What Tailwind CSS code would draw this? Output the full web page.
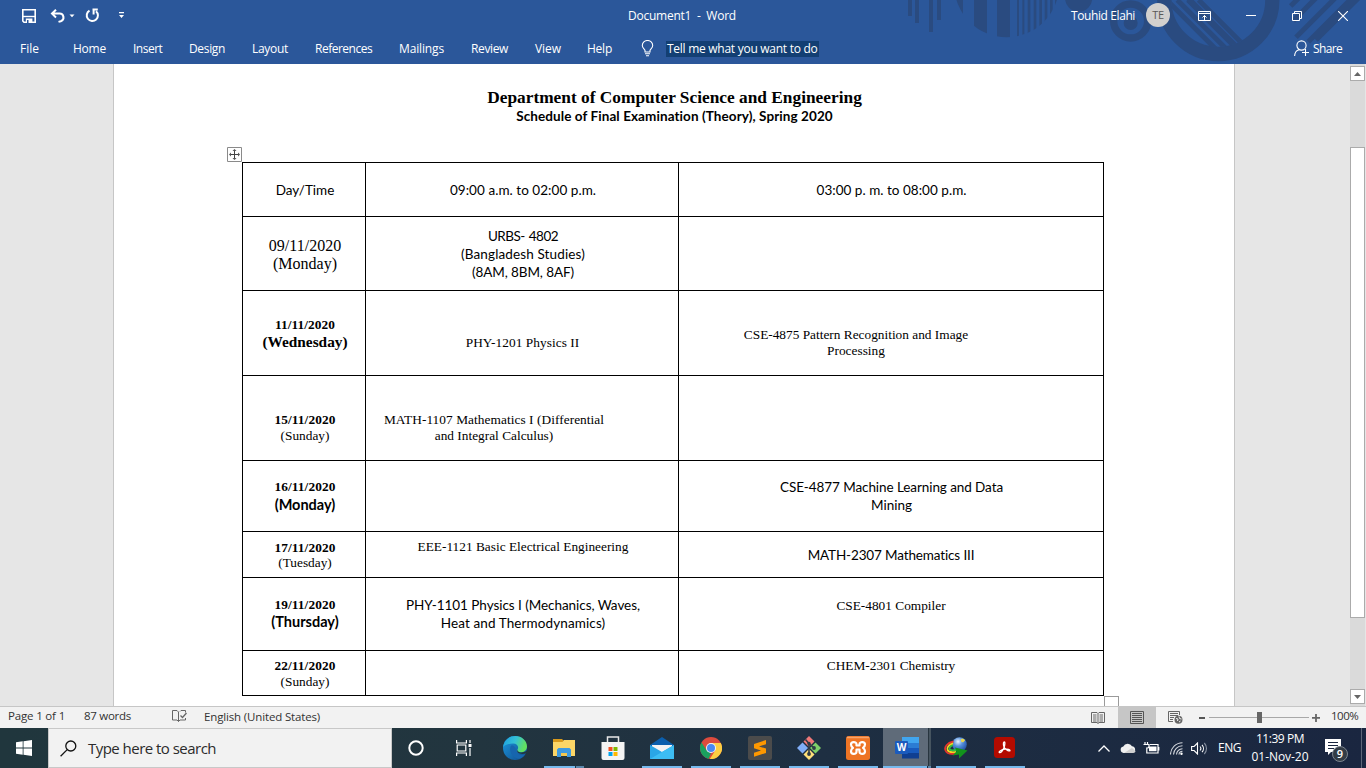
<!DOCTYPE html>
<html lang="en">
<head>
<meta charset="utf-8">
<title>Document1 - Word</title>
<script src="https://cdn.jsdelivr.net/npm/@tailwindcss/browser@4"></script>
</head>
<body class="w-[1366px] h-[768px] overflow-hidden flex flex-col font-['Open_Sans',sans-serif] text-[12px]">

<!-- Title bar and ribbon tabs -->
<header class="relative h-16 shrink-0 bg-[#2b579a] text-white flex flex-col">
  <svg class="absolute right-0 top-0" width="476" height="64" viewBox="0 0 1428 192">
    <defs>
      <clipPath id="disc"><circle cx="350" cy="-45" r="157"/></clipPath>
      <clipPath id="ring"><circle cx="985" cy="0" r="141"/></clipPath>
    </defs>
    <g fill="#2a4b80">
      <path d="M54 0h12v48H54zM75 0h12v69H75zM117 0h12v96h-12zM141 0h12v60h-12z"/>
      <g clip-path="url(#disc)"><path d="M190 0h29v120h-29zM252 0h39v120h-39zM321 0h39v120h-39zM381 0h6v120h-6zM397 0h6v120h-6zM413 0h8v120h-8zM431 0h8v120h-8zM448 0h8v120h-8zM464 0h8v120h-8zM480 0h8v120h-8zM495 0h8v120h-8z"/></g>
      <circle cx="566" cy="-6" r="41"/>
      <circle cx="722" cy="69" r="17"/>
    </g>
    <g fill="none" stroke="#2a4b80">
      <circle cx="722" cy="63" r="51" stroke-width="22"/>
      <circle cx="722" cy="69" r="17" stroke-width="8"/>
      <circle cx="985" cy="0" r="162" stroke-width="43"/>
      <g clip-path="url(#ring)" stroke-width="15"><path d="M830 0l160 160M862 0l160 160M894 0l160 160M926 0l160 160M850 -50l220 220"/></g>
      <g stroke-width="15"><path d="M1240 -20l-38 38M1292 -20l-82 82M1350 -20l-132 132M1400 -20l-145 145M1440 -40l-162 160"/></g>
    </g>
  </svg>

  <div class="relative h-[31px] flex items-center whitespace-pre">
    <div class="w-[628px] flex items-center pl-[22px]">
      <svg width="14" height="14" viewBox="0 0 14 14" fill="none" stroke="#fff" stroke-width="1.6"><path d="M.8 .8h12.4v12.4H2L.8 12z"/><path d="M1 7.500h12" stroke-width="1.400"/><path d="M3.800 9.500h6.600V14H3.800z" fill="#fff" stroke="none"/><path d="M5 11h1.500v3H5z" fill="#2b579a" stroke="none"/></svg>
      <svg class="ml-[14px]" width="16" height="14" viewBox="0 0 16 14" fill="none" stroke="#fff" stroke-width="2"><path d="M6 .8L2 4.600l4 3.800M2.400 4.600h7a3.900 3.900 0 0 1 1.400 7.600L8.500 12.900"/></svg>
      <svg class="ml-[3px]" width="6" height="4" viewBox="0 0 6 4"><path d="M.5.5h5L3 3.200z" fill="#fff"/></svg>
      <svg class="ml-2.5" width="15" height="15" viewBox="0 0 15 15" fill="none" stroke="#fff" stroke-width="2"><path d="M4.500 2.600A5.600 5.600 0 1 0 11 3.200M7.500 1.500h5.300M8.600 1v5.600"/></svg>
      <svg class="ml-[18px]" width="7" height="7" viewBox="0 0 7 7"><path d="M1 0h5v1.200H1zM1 3h5L3.500 6z" fill="#fff"/></svg>
    </div>
    <div class="w-[443px] tracking-[-0.24px]">Document1  -  Word</div>
    <div class="w-[75px] tracking-[-0.4px]">Touhid Elahi</div>
    <div class="size-6 -mt-0.5 rounded-full bg-[#d2d0ce] text-[#5b5957] text-[11px] leading-6 text-center tracking-[-0.4px]">TE</div>
    <svg class="ml-7" width="13" height="10" viewBox="0 0 13 10" fill="none" stroke="#fff"><path d="M.5.5h12v9H.5zM.5 2.500h12M6.500 9V4.500M4.500 6.500l2-2 2 2"/></svg>
    <svg class="ml-[35px]" width="10" height="10" viewBox="0 0 10 10" stroke="#fff"><path d="M0 4.500h10"/></svg>
    <svg class="ml-9" width="10" height="10" viewBox="0 0 10 10" fill="none" stroke="#fff"><path d="M.5 2.500h7v7h-7zM2.500 2.500v-2h7v7h-2"/></svg>
    <svg class="ml-9" width="10" height="10" viewBox="0 0 10 10" stroke="#fff" stroke-width="1.100"><path d="M0 0l10 10M10 0L0 10"/></svg>
  </div>

  <nav class="relative h-[33px] flex items-center pl-5 pt-[2px]">
    <div class="w-[53px]">File</div>
    <div class="w-[60px] tracking-[-0.23px]">Home</div>
    <div class="w-[56px] tracking-[-0.5px]">Insert</div>
    <div class="w-[63px] tracking-[-0.34px]">Design</div>
    <div class="w-[63px] tracking-[-0.3px]">Layout</div>
    <div class="w-[84px] tracking-[-0.5px]">References</div>
    <div class="w-[72px] tracking-[-0.14px]">Mailings</div>
    <div class="w-[64px] tracking-[-0.37px]">Review</div>
    <div class="w-[52px] tracking-[-0.06px]">View</div>
    <div class="w-[54px] tracking-[-0.24px]">Help</div>
    <svg width="13" height="17" viewBox="0 0 13 17" fill="none" stroke="#fff" stroke-width="1.100"><path d="M4 12V10.500C3.600 9 1.300 8 1.300 5.400a5.200 4.900 0 0 1 10.400 0C11.700 8 9.400 9 9 10.500V12zM4 13.700h5M5 15.800h3"/></svg>
    <div class="ml-3 w-[153px] h-4 leading-4 pl-px bg-[#133f73] tracking-[-0.27px] whitespace-nowrap">Tell me what you want to do</div>
    <svg class="ml-[475px]" width="15" height="17" viewBox="0 0 15 17" fill="none" stroke="#fff" stroke-width="1.100"><circle cx="7.500" cy="5.500" r="4.600"/><path d="M.6 16c.2-3.500 1.900-5.600 4.500-6.200M11.500 9v7M8 12.500h7"/></svg>
    <div class="ml-1 tracking-[-0.6px]">Share</div>
  </nav>
</header>

<!-- Document area -->
<main class="h-[642px] shrink-0 bg-[#e6e6e6] flex overflow-hidden text-black">
  <section class="ml-[113px] w-[1122px] border-x border-[#c6c6c6] bg-white flex flex-col font-['Lato',sans-serif] text-[13.5px]">
    <h1 class="mt-6 w-[1121px] text-center font-['Liberation_Serif',serif] font-bold text-[17.33px] leading-5">Department of Computer Science and Engineering</h1>
    <h2 class="-mt-px w-[1121px] text-center font-bold text-[13.5px] leading-[18px] tracking-[0.08px]">Schedule of Final Examination (Theory), Spring 2020</h2>
    <svg class="ml-[113px] mt-[22px] shrink-0" width="15" height="15" viewBox="0 0 15 15" fill="none" stroke="#8a8a8a"><path d="M.5.5h14v14H.5z"/><path d="M7.500 3v9M3 7.500h9" stroke="#444"/><path d="M5.500 4l2-2 2 2zM5.500 11l2 2 2-2zM4 5.500l-2 2 2 2zM11 5.500l2 2-2 2z" fill="#555" stroke="none"/></svg>

    <div class="ml-32 w-[862px] shrink-0 bg-black p-px grid grid-cols-[122px_312px_424px] grid-rows-[53px_73px_84px_84px_70px_45px_72px_44px] gap-px text-center leading-[18px] whitespace-nowrap *:bg-white">
      <div class="pt-[18px] pl-[2px]">Day/Time</div>
      <div class="pt-[18px] pl-[2px] tracking-[0.05px]">09:00 a.m. to 02:00 p.m.</div>
      <div class="pt-[18px] pl-px tracking-[0.03px]">03:00 p. m. to 08:00 p.m.</div>

      <div class="pt-5 pl-[2px] font-['Liberation_Serif',serif] text-base leading-[18px]">09/11/2020<br>(Monday)</div>
      <div class="pt-2.5 pl-[2px]"><p class="tracking-[-0.5px] [word-spacing:1px]">URBS- 4802</p><p class="tracking-[0.13px]">(Bangladesh Studies)</p><p class="tracking-[-0.1px]">(8AM, 8BM, 8AF)</p></div>
      <div></div>

      <div class="pt-[26px] pl-[2px] font-['Liberation_Serif',serif] font-bold"><p class="text-[13.33px] leading-4 tracking-[0.08px]">11/11/2020</p><p class="text-[15.33px]">(Wednesday)</p></div>
      <div class="pt-11 pl-px font-['Liberation_Serif',serif] text-[13.33px] leading-4 tracking-[0.05px]">PHY-1201 Physics II</div>
      <div class="pt-9 pr-[70px] font-['Liberation_Serif',serif] text-[13.33px] leading-4">CSE-4875 Pattern Recognition and Image<br>Processing</div>

      <div class="pt-9 pl-[2px] font-['Liberation_Serif',serif] text-[13.33px] leading-4"><b class="tracking-[0.08px]">15/11/2020</b><br>(Sunday)</div>
      <div class="pt-9 pr-[56px] font-['Liberation_Serif',serif] text-[13.33px] leading-4"><p class="tracking-[0.06px]">MATH-1107 Mathematics I (Differential</p><p>and Integral Calculus)</p></div>
      <div></div>

      <div class="pt-[18px] pl-[2px] font-bold"><p class="font-['Liberation_Serif',serif] text-[13.33px] leading-4 tracking-[0.08px]">16/11/2020</p><p class="pt-px text-[14.500px]">(Monday)</p></div>
      <div></div>
      <div class="pt-[17px] pl-px"><p class="tracking-[-0.08px]">CSE-4877 Machine Learning and Data</p><p>Mining</p></div>

      <div class="pt-2 pl-[2px] font-['Liberation_Serif',serif] text-[13.33px] leading-[15px]"><b class="tracking-[0.08px]">17/11/2020</b><br>(Tuesday)</div>
      <div class="pt-[7px] pl-[2px] font-['Liberation_Serif',serif] text-[13.33px] leading-4">EEE-1121 Basic Electrical Engineering</div>
      <div class="pt-[14px] tracking-[-0.14px]">MATH-2307 Mathematics III</div>

      <div class="pt-[19px] pl-[2px] font-bold"><p class="font-['Liberation_Serif',serif] text-[13.33px] leading-4 tracking-[0.08px]">19/11/2020</p><p class="text-[14.500px]">(Thursday)</p></div>
      <div class="pt-[18px] pl-[2px]"><p class="tracking-[-0.05px]">PHY-1101 Physics I (Mechanics, Waves,</p><p class="tracking-[0.11px]">Heat and Thermodynamics)</p></div>
      <div class="pt-5 font-['Liberation_Serif',serif] text-[13.33px] leading-4">CSE-4801 Compiler</div>

      <div class="pt-[7px] pl-[2px] font-['Liberation_Serif',serif] text-[13.33px] leading-4"><b class="tracking-[0.08px]">22/11/2020</b><br>(Sunday)</div>
      <div></div>
      <div class="pt-[7px] font-['Liberation_Serif',serif] text-[13.33px] leading-4">CHEM-2301 Chemistry</div>
    </div>
    <div class="ml-[990px] w-[15px] h-[15px] shrink-0 border border-[#9a9a9a]"></div>
  </section>

  <!-- Vertical scrollbar -->
  <div class="ml-[115px] w-[15px] flex flex-col bg-[#dadada] pt-[2px] pb-0.5">
    <div class="h-[15px] border border-[#ababab] bg-white flex items-center justify-center"><svg width="7" height="4" viewBox="0 0 7 4"><path d="M0 4L3.500 0 7 4z" fill="#666"/></svg></div>
    <div class="mt-[66px] h-[471px] border border-[#ababab] bg-white"></div>
    <div class="mt-auto h-[15px] border border-[#ababab] bg-white flex items-center justify-center"><svg width="7" height="4" viewBox="0 0 7 4"><path d="M0 0L3.500 4 7 0z" fill="#666"/></svg></div>
  </div>
</main>

<!-- Status bar -->
<div class="h-[22px] shrink-0 border-t border-[#c6c6c6] bg-[#f2f2f2] text-[#333] text-[11.5px] flex items-center pl-2 whitespace-nowrap">
  <div class="w-[76px] tracking-[-0.17px] pb-[3px]">Page 1 of 1</div>
  <div class="w-[89px] tracking-[-0.27px] pb-[3px]">87 words</div>
  <svg class="-mt-0.5 -ml-px mr-px" width="15" height="13" viewBox="0 0 15 13" fill="none" stroke="#666"><path d="M6.500 11.500L5 10H.5V.5H5l1.500 1.500v9.500L8 10M8 1.500L9 .5h4.500v2M13.500 8v2H8"/><path d="M8.500 5.500l2 2 4-4.500" stroke-width="1.300"/></svg>
  <div class="ml-4 w-[887px] tracking-[-0.15px] pb-px">English (United States)</div>
  <svg width="14" height="12" viewBox="0 0 14 12" fill="none" stroke="#666"><path d="M.5.5H6l1 1 1-1h5.500v10H8l-1 1-1-1H.5zM7 1.500v10M2 3h3.500M2 5h3.500M2 7h3.500M2 9h3.500M8.500 3H12M8.500 5H12M8.500 7H12M8.500 9H12"/></svg>
  <div class="ml-[13px] w-[38px] h-full bg-[#c6c6c6] flex items-center justify-center"><svg width="14" height="13" viewBox="0 0 14 13" fill="none" stroke="#555"><path d="M.5.5h13v12H.5zM2 2.500h10M2 4.500h10M2 6.500h10M2 8.500h10M2 10.500h10"/></svg></div>
  <svg class="ml-3" width="15" height="13" viewBox="0 0 15 13" fill="none" stroke="#666"><path d="M5 10.500H.5V.5h11V4M2 2.500h8M2 4.500h8M2 6.500h4M2 8.500h3"/><circle cx="10.500" cy="8.800" r="4" fill="#666" stroke="none"/><path d="M8 7.500l2 .5-.5 2M11 5.500l.5 2 2 .5M11 11l1.500-1" stroke="#f2f2f2"/></svg>
  <div class="ml-4 w-1.5 h-0.5 bg-[#555]"></div>
  <div class="ml-1 w-[100px] h-full flex items-center bg-[linear-gradient(#a8a8a8,#a8a8a8)] bg-[length:100px_1px] bg-center bg-no-repeat"><div class="ml-12 w-[5px] h-[11px] bg-[#666]"></div></div>
  <svg class="ml-[3px]" width="8" height="8" viewBox="0 0 8 8"><path d="M0 3h8v1.800H0zM3.100 0h1.800v8H3.100z" fill="#666"/></svg>
  <div class="ml-[11px] tracking-[-0.5px] pb-[3px]">100%</div>
</div>

<!-- Taskbar -->
<footer class="h-10 shrink-0 flex text-white bg-[linear-gradient(90deg,#20363d,#22353f_35%,#1e2f42_60%,#1a2640)]">
  <div class="w-12 flex items-center justify-center"><svg width="16" height="16" viewBox="0 0 16 16" fill="#fff"><path d="M0 2.200L6.700 1.300v6.300H0zM7.500 1.200L16 0v7.600H7.500zM0 8.400h6.700v6.300L0 13.800zM7.500 8.400H16V16l-8.500-1.200z"/></svg></div>
  <div class="w-[344px] bg-[#f2f2f2] border border-[#c8c8c8] flex items-center pl-[11px] text-[#2b2b2b] text-[15px] tracking-[-0.53px]">
    <svg width="17" height="17" viewBox="0 0 17 17" fill="none" stroke="#111" stroke-width="1.300"><circle cx="10.800" cy="6" r="5"/><path d="M7.200 9.600L.6 16.200"/></svg>
    <span class="ml-[11px]">Type here to search</span>
  </div>
  <div class="w-12 flex items-center justify-center"><svg width="16" height="16" viewBox="0 0 16 16" fill="none" stroke="#fff" stroke-width="2"><circle cx="8" cy="8" r="6.700"/></svg></div>
  <div class="w-[51px] pl-4 flex items-center"><svg width="17" height="16" viewBox="0 0 17 16" fill="none" stroke="#fff" stroke-width="1.200"><path d="M.6 0v3h9.800V0M.6 16v-3h9.800v3M1.200 5h8.600v6H1.200zM14 0v3M14 8v8"/><path d="M12.500 4h3v3h-3z" fill="#fff" stroke="none"/></svg></div>

  <!-- Edge -->
  <div class="w-[49px] pl-3 pt-2"><svg width="24" height="24" viewBox="0 0 24 24"><defs><linearGradient id="e1" x1="0" y1="0" x2="1" y2=".3"><stop offset="0" stop-color="#1b9de2"/><stop offset=".55" stop-color="#35c1d6"/><stop offset="1" stop-color="#62e060"/></linearGradient><linearGradient id="e2" x1="0" y1="0" x2="1" y2="1"><stop offset="0" stop-color="#1b9ae0"/><stop offset="1" stop-color="#114a8b"/></linearGradient></defs><circle cx="12" cy="12" r="12" fill="url(#e2)"/><path d="M0 11C1 4.500 6 0 12.200 0 19 0 24 5 24 10.500c0 3.800-3 5.800-6.300 5.800-3 0-4.500-1.300-3.400-2.500 2-2.500.2-6.300-4.300-6.300C5.500 7.500 1.500 9 0 11z" fill="url(#e1)"/><path d="M8.500 9C5 13 8 21.500 16 22.800c3-.8 5-2.500 6.400-4.800-4 2-9 .8-8.100-4.300-2-.5-2-3.700-5.800-4.700z" fill="#1765ae"/><path d="M14.400 13.700c-1.400 3 3.100 5.600 9.200 3.300l.9-2.500c-4 3.200-10.100 2.500-10.100-.8z" fill="#22363f"/></svg></div>
  <!-- File Explorer -->
  <div class="w-[49px] flex flex-col"><svg class="ml-[13px] mt-2.5" width="22" height="19" viewBox="0 0 22 19"><path d="M0 1h9l2 2v3H0z" fill="#d99a1c"/><path d="M0 4h9.500L11 2h11v16H0z" fill="#fcd667"/><path d="M4 19V11.500L5.500 10h11l1.500 1.500V19h-4v-4H8v4z" fill="#3e9ae0"/><path d="M8 15h6v3H8z" fill="#f4c74f"/></svg><div class="mt-auto ml-1 w-10 h-0.5 flex"><i class="w-[31px] bg-[#76b9ed]"></i><i class="ml-px flex-1 bg-[#5a87ab]"></i></div></div>
  <!-- Store -->
  <div class="w-[49px] flex flex-col"><svg class="ml-3 mt-2" width="24" height="24" viewBox="0 0 24 24"><path d="M6.500 8V1h11v7" fill="none" stroke="#e8e8e8" stroke-width="1.500"/><path d="M.5 6h23v16a2 2 0 0 1-2 2h-19a2 2 0 0 1-2-2z" fill="#f4f4f4"/><path d="M7.500 11h4v4h-4z" fill="#f25022"/><path d="M12.500 11h4v4h-4z" fill="#7fba00"/><path d="M7.500 16h4v4h-4z" fill="#00a4ef"/><path d="M12.500 16h4v4h-4z" fill="#ffb900"/></svg></div>
  <!-- Mail -->
  <div class="w-[49px] flex flex-col"><svg class="ml-3 mt-2" width="24" height="24" viewBox="0 0 24 24"><path d="M0 9L12 1l12 8v3H0z" fill="#0b5fad"/><path d="M2 9h20v8H2z" fill="#f3f3f3"/><path d="M0 9l12 7 12-7v14H0z" fill="#2aa6e6"/><path d="M0 23L24 9v14z" fill="#3dbdf3"/></svg><div class="mt-auto ml-1 w-10 h-0.5 bg-[#76b9ed]"></div></div>
  <!-- Chrome -->
  <div class="w-[49px] flex flex-col"><svg class="ml-[13px] mt-[9px]" width="22" height="22" viewBox="0 0 22 22"><circle cx="11" cy="11" r="11" fill="#dd4b3e"/><path d="M1.500 5.500L6.700 13.500 11 16 8.700 21.800A11 11 0 0 1 1.500 5.500z" fill="#1aa15f"/><path d="M11 6h9.800A11 11 0 0 1 9.800 22l5.500-8.500z" fill="#fdce43"/><circle cx="11" cy="11" r="5" fill="#f4f4f4"/><circle cx="11" cy="11" r="4" fill="#4a89f3"/></svg><div class="mt-auto ml-1 w-10 h-0.5 bg-[#76b9ed]"></div></div>
  <!-- Sublime Text -->
  <div class="w-[49px] flex flex-col"><svg class="ml-3 mt-2" width="24" height="24" viewBox="0 0 24 24"><rect width="24" height="24" rx="2" fill="#4b4b4b"/><path d="M18 4L6 8v4.300l7 2.200-7 2.200V20.700L18 17v-4.500l-7-2 7-2.300z" fill="#ff9800"/></svg><div class="mt-auto ml-1 w-10 h-0.5 bg-[#76b9ed]"></div></div>
  <!-- Git -->
  <div class="w-[49px] flex flex-col"><svg class="ml-3 mt-2" width="24" height="24" viewBox="0 0 24 24"><path d="M12 0l5.500 5.500L12 11 6.500 5.500z" fill="#f07878"/><path d="M5.500 6.500L11 12l-5.500 5.500L0 12z" fill="#80aef8"/><path d="M18.500 6.500L24 12l-5.500 5.500L13 12z" fill="#7ed069"/><path d="M12 13l5.500 5.500L12 24l-5.500-5.500z" fill="#ffe07a"/><path d="M8.500 3.500L12 7.500V18M12 7.500l5 4.500" fill="none" stroke="#2e3b46" stroke-width="1.600"/><circle cx="12" cy="7.500" r="1.700" fill="#2e3b46"/><circle cx="12" cy="18" r="1.900" fill="#2e3b46"/><circle cx="17" cy="12" r="1.900" fill="#2e3b46"/></svg><div class="mt-auto ml-1 w-10 h-0.5 bg-[#76b9ed]"></div></div>
  <!-- XAMPP -->
  <div class="w-[49px] flex flex-col"><svg class="ml-3 mt-2" width="24" height="24" viewBox="0 0 24 24"><rect width="24" height="24" rx="2.500" fill="#ee7424"/><path d="M1 1.500h22" stroke="#f7a36a" stroke-width="1.500"/><path d="M10.500 9.500V8.200C10.500 5.500 5 5.500 5 8.500c0 1.500.8 2.500 2 3.300-1.200.8-2 1.900-2 3.400 0 3.500 5.500 3.500 5.500.6v-2.300h3v2.300c0 2.900 5.500 2.900 5.500-.6 0-1.500-.8-2.600-2-3.400 1.200-.8 2-1.800 2-3.300 0-3-5.500-3-5.500-.3v1.300z" fill="none" stroke="#fff" stroke-width="2.200" stroke-linejoin="round"/></svg><div class="mt-auto ml-1 w-10 h-0.5 bg-[#76b9ed]"></div></div>
  <!-- Word, active window -->
  <div class="w-[49px] flex flex-col"><div class="h-[38px] w-12 flex"><div class="w-[45px] bg-[#5f6b79] pl-3 pt-2"><svg width="24" height="24" viewBox="0 0 24 24"><path d="M7 1h17v6H7z" fill="#41a5ee"/><path d="M7 7h17v5H7z" fill="#2b7cd3"/><path d="M7 12h17v5H7z" fill="#185abd"/><path d="M7 17h17v5.500H7z" fill="#103f91"/><rect y="5" width="13" height="13" rx="1" fill="#1b5bbd"/><text x="6.500" y="15" text-anchor="middle" class="font-['Open_Sans',sans-serif] font-bold text-[10px]" fill="#fff">W</text></svg></div><i class="w-[3px] bg-[#46545f] border-l border-[#28353f]"></i></div><div class="w-12 h-0.5 flex"><i class="w-11 bg-[#76b9ed]"></i><i class="ml-px flex-1 bg-[#5a87ab]"></i></div></div>
  <!-- Internet Download Manager -->
  <div class="w-[49px] flex flex-col"><svg class="ml-3 mt-[9px]" width="24" height="22" viewBox="0 0 24 22"><defs><radialGradient id="globe" cx=".4" cy=".3" r=".8"><stop offset="0" stop-color="#e9f4ff"/><stop offset=".4" stop-color="#5590dc"/><stop offset="1" stop-color="#153f94"/></radialGradient></defs><circle cx="15.500" cy="7.500" r="7.300" fill="url(#globe)"/><path d="M17 2c2-.5 3.500 0 4 1.500l-2 2-2-1z" fill="#e8d44c"/><path d="M9.500 4.500C3 6 0 10 1.500 13.500c1.300 3 5.500 4 10.500 3" fill="none" stroke="#e5352c" stroke-width="1.800"/><path d="M9 6.300C4.500 8 2.500 11 3.600 13c1 2 4.500 2.500 8.400 1.800" fill="none" stroke="#f6d423" stroke-width="1.800"/><path d="M8.800 8C6 9.500 5 11.200 5.700 12.400c.8 1 3.300 1.200 6.300.6" fill="none" stroke="#2fc043" stroke-width="1.800"/><path d="M11 10.500l12.500 3L15 21.500v-4L8.500 18.500l4-4z" fill="#12931c"/></svg><div class="mt-auto ml-1 w-10 h-0.5 bg-[#76b9ed]"></div></div>
  <!-- Acrobat -->
  <div class="w-[49px] flex flex-col"><svg class="ml-[13px] mt-[9px]" width="21" height="21" viewBox="0 0 21 21"><rect width="21" height="21" rx="3.500" fill="#b30b00"/><path d="M10 5c1.300-1 1 2.500.2 5C9.300 13 7 16 5.500 15.700c-1.500-1 2-3.200 5.500-3.500 3-.3 5 .3 5 1.300-.3 1.200-3.500-.3-5.200-2.300C9.500 9.500 8.800 6 10 5z" fill="none" stroke="#fff" stroke-width="1.300"/></svg><div class="mt-auto ml-1 w-10 h-0.5 bg-[#76b9ed]"></div></div>

  <!-- Notification area -->
  <div class="flex-1 flex items-center pl-[68px] text-[12px]">
    <svg width="12" height="7" viewBox="0 0 12 7" fill="none" stroke="#fff" stroke-width="1.300"><path d="M.5 6.500L6 1l5.500 5.500"/></svg>
    <svg class="ml-2.5" width="16" height="10" viewBox="0 0 16 10"><path d="M3.500 10a3.300 3.300 0 0 1-.2-6.500A4.800 4.800 0 0 1 12 3.300 3.400 3.400 0 0 1 12.500 10z" fill="#f0f0f0"/><path d="M4 10l8-5 3.500 3c0 1-1 2-3 2z" fill="#cfcfcf"/></svg>
    <svg class="ml-[7px]" width="17" height="12" viewBox="0 0 17 12" fill="none" stroke="#fff" stroke-width="1.200"><path d="M2 0v2M4.500 0v2M.5 2.500h5.500v1.800a2 2 0 0 1-2.200 1.700V11h11.200V2.500H7M15.800 5v3.500"/><path d="M6 4.500h7.500v4.700H6z" fill="#fff" stroke="none"/></svg>
    <svg class="ml-2.5" width="13" height="13" viewBox="0 0 13 13" fill="none" stroke="#d5d9df" stroke-width="1.100"><path d="M.5 12.500A12 12 0 0 1 12.500 .8M3.500 12.500a9 9 0 0 1 9-8.700M6.500 12.500a6 6 0 0 1 6-5.700M9 12.500a3.500 3.500 0 0 1 3.500-3.200"/><circle cx="11.500" cy="11.700" r="1.200" fill="#fff" stroke="none"/></svg>
    <svg class="ml-2" width="17" height="13" viewBox="0 0 17 13" fill="none" stroke="#fff" stroke-width="1.100"><path d="M.6 4.500h2.500L6.500 1v11L3.100 8.500H.6zM9 4.500a3 3 0 0 1 0 4M11 2.800a5.500 5.500 0 0 1 0 7.400"/><path d="M13.300 1a8 8 0 0 1 0 11" stroke="#8790a0"/></svg>
    <div class="ml-[10px] w-[23px] tracking-[-0.45px]">ENG</div>
    <div class="ml-2.5 w-[58px] text-center leading-[18px] pb-px"><p class="tracking-[-0.45px]">11:39 PM</p><p class="tracking-[-0.05px]">01-Nov-20</p></div>
    <div class="relative ml-4 w-6 h-6 mt-0.5">
      <svg width="24" height="24" viewBox="0 0 24 24"><path d="M0 2h16v13H6l-3 3v-3H0z" fill="#fff"/><path d="M3 5.500h10M3 8.500h10M3 11.500h6" stroke="#1a2640"/></svg>
      <div class="absolute left-[7px] top-[9px] size-4 rounded-full bg-[#333c46] border border-[#7d858f] text-[11px] font-semibold leading-[14px] text-center">9</div>
    </div>
    <div class="ml-auto mr-1 w-px h-10 bg-[#5d6678]"></div>
  </div>
</footer>
</body>
</html>
